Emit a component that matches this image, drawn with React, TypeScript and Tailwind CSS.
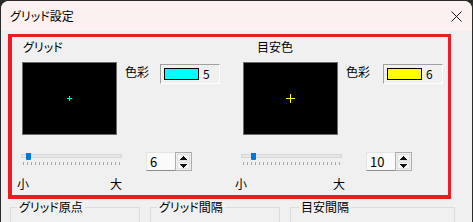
import React from "react";

const font = "font-['Noto_Sans_CJK_JP','Noto_Sans',sans-serif] [font-feature-settings:'palt']";

function Cross({ color, size }: { color: string; size: number }) {
  return (
    <svg width={size} height={size} viewBox={`0 0 ${size} ${size}`} shapeRendering="crispEdges">
      <rect x={Math.floor(size / 2)} y={0} width={1} height={size} fill={color} />
      <rect x={0} y={Math.floor(size / 2)} width={size} height={1} fill={color} />
    </svg>
  );
}

function Preview({ color, size }: { color: string; size: number }) {
  return (
    <div className="w-[95px] h-[73px] bg-black border border-[#6b6b6b] flex items-center justify-center shrink-0">
      <Cross color={color} size={size} />
    </div>
  );
}

function ColorField({ swatch, num, swatchMl }: { swatch: string; num: string; swatchMl: string }) {
  return (
    <div className="w-[60px] h-[20px] mt-[2px] border border-t-[#a0a0a0] border-l-[#a0a0a0] border-r-white border-b-white flex items-center">
      <div className={`w-[35px] h-[12px] border border-black ${swatchMl}`} style={{ background: swatch }} />
      <span className="ml-[4px] text-[12px] leading-[14px] text-black">{num}</span>
    </div>
  );
}

function Slider({ thumb }: { thumb: number }) {
  const ticks = Array.from({ length: 25 });
  return (
    <div className="w-[101px] h-[16px] relative shrink-0">
      <div className="absolute left-0 top-[2px] w-[101px] h-[4px] bg-[#e7e7e7] border border-[#d6d6d6]" />
      <div className="absolute top-[1px] w-[5px] h-[7px] bg-[#0078d7] rounded-b-[1px]" style={{ left: thumb }} />
      <div className="absolute left-[2px] top-[10px] flex gap-[3px]">
        {ticks.map((_, i) => (
          <div key={i} className="w-px h-[3px] bg-[#a6a6a6]" />
        ))}
      </div>
    </div>
  );
}

function Spin({ value }: { value: string }) {
  return (
    <div className="flex h-[19px] shrink-0">
      <div className="w-[29px] h-[19px] bg-[#fafafa] border-b border-b-[#8c8c8c] border-t border-t-[#e3e3e3] border-l border-l-[#e3e3e3] flex items-center pl-[3px] text-[13px] leading-[15px] text-black">
        {value}
      </div>
      <div className="w-[17px] h-[19px] border border-[#adadad] bg-[#f0f0f0] flex flex-col p-px gap-px">
        <div className="flex-1 bg-[#f5f5f5] border border-[#e0e0e0] flex items-center justify-center">
          <svg width="7" height="4" viewBox="0 0 7 4" shapeRendering="crispEdges">
            <polygon points="3.5,0 7,4 0,4" fill="#111" />
          </svg>
        </div>
        <div className="flex-1 bg-[#f5f5f5] border border-[#e0e0e0] flex items-center justify-center">
          <svg width="7" height="4" viewBox="0 0 7 4" shapeRendering="crispEdges">
            <polygon points="0,0 7,0 3.5,4" fill="#111" />
          </svg>
        </div>
      </div>
    </div>
  );
}

function Column({
  width,
  title,
  titlePl,
  boxPl,
  sliderPl,
  smallPl,
  crossColor,
  crossSize,
  swatch,
  num,
  labelMl,
  frameMl,
  thumb,
  spinVal,
}: {
  width: string;
  title: string;
  titlePl: string;
  boxPl: string;
  sliderPl: string;
  smallPl: string;
  crossColor: string;
  crossSize: number;
  swatch: string;
  num: string;
  labelMl: string;
  frameMl: string;
  thumb: number;
  spinVal: string;
}) {
  return (
    <div className={`${width} flex flex-col shrink-0`}>
      <div className={`h-[25px] pt-[3px] ${titlePl} text-[12px] leading-[14px] text-black`}>{title}</div>
      <div className={`flex ${boxPl}`}>
        <Preview color={crossColor} size={crossSize} />
        <span className={`${labelMl} mt-[3px] text-[12px] leading-[14px] text-black`}>色彩</span>
        <div className={frameMl}>
          <ColorField swatch={swatch} num={num} swatchMl="ml-[3px]" />
        </div>
      </div>
      <div className={`flex mt-[17px] ${sliderPl}`}>
        <Slider thumb={thumb} />
        <div className="ml-[24px]">
          <Spin value={spinVal} />
        </div>
      </div>
      <div className={`mt-[6px] ${smallPl} w-[110px] flex justify-between text-[12px] leading-[14px] text-black`}>
        <span>小</span>
        <span>大</span>
      </div>
    </div>
  );
}

function Group({ label, width, legendMl }: { label: string; width: string; legendMl: string }) {
  return (
    <fieldset className={`${width} h-[40px] border border-[#dcdcdc] shrink-0`}>
      <legend className={`${legendMl} px-[2px] text-[12px] leading-[14px] text-black`}>{label}</legend>
    </fieldset>
  );
}

export default function App() {
  return (
    <div className={`w-[473px] h-[222px] bg-[#2a2a2a] overflow-hidden pt-px pl-px ${font}`}>
      <div className="w-[471px] h-[221px] rounded-t-[8px] bg-[#f0f0f0] flex flex-col overflow-hidden">
        <div className="h-[30px] bg-[#faf1f0] flex items-center justify-between pl-[9px] pr-[10px] shrink-0">
          <span className="text-[12px] leading-[14px] text-black">グリッド設定</span>
          <svg width="11" height="11" viewBox="0 0 11 11">
            <path d="M0.5 0.5 L10.5 10.5 M10.5 0.5 L0.5 10.5" stroke="#1a1a1a" strokeWidth="1" />
          </svg>
        </div>
        <div className="pt-[3px] pl-[7px]">
          <div className="w-[443px] h-[165px] border-l-4 border-b-4 border-t-[3px] border-r-[3px] border-[#ed1c24] flex">
            <Column
              width="w-[223px]"
              title="グリッド"
              titlePl="pl-[11px]"
              boxPl="pl-[10px]"
              sliderPl="pl-[9px]"
              smallPl="pl-[5px]"
              crossColor="#00ffff"
              crossSize={5}
              swatch="#00ffff"
              num="5"
              labelMl="ml-[8px]"
              frameMl="ml-[11px]"
              thumb={5}
              spinVal="6"
            />
            <Column
              width="w-[213px]"
              title="目安色"
              titlePl="pl-[22px]"
              boxPl="pl-[8px]"
              sliderPl="pl-[6px]"
              smallPl="pl-0"
              crossColor="#ffff00"
              crossSize={9}
              swatch="#ffff00"
              num="6"
              labelMl="ml-[8px]"
              frameMl="ml-[13px]"
              thumb={10}
              spinVal="10"
            />
          </div>
        </div>
        <div className="flex pl-[9px] gap-[10px] mt-px">
          <Group label="グリッド原点" width="w-[130px]" legendMl="ml-[6px]" />
          <Group label="グリッド間隔" width="w-[130px]" legendMl="ml-[6px]" />
          <Group label="目安間隔" width="w-[165px]" legendMl="ml-[8px]" />
        </div>
      </div>
    </div>
  );
}
